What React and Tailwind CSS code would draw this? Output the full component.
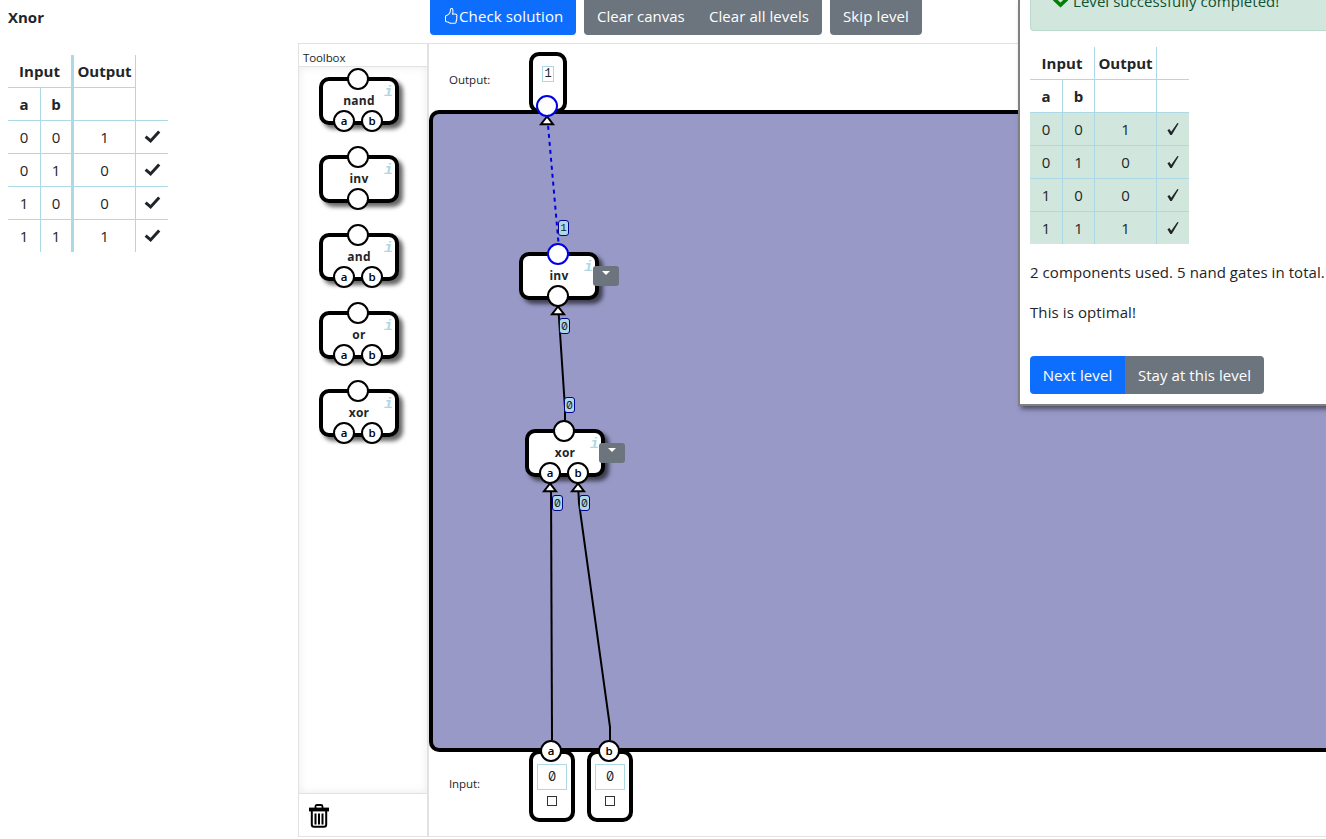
import React from 'react';
import { BsHandThumbsUp } from 'react-icons/bs';

const ROWS = [
  ['0', '0', '1'],
  ['0', '1', '0'],
  ['1', '0', '0'],
  ['1', '1', '1'],
];

function Port({ className, children, active }) {
  return (
    <span
      className={`absolute z-10 flex size-[22px] items-center justify-center rounded-full border-2 bg-white text-[11.5px] font-semibold leading-none text-black ${active ? 'border-[#0000e6]' : 'border-black'} ${className}`}
    >
      {children && <span className="-mt-px">{children}</span>}
    </span>
  );
}

function Gate({ name, className, active, menu }) {
  return (
    <div
      className={`h-12 w-20 rounded-[10px] border-4 border-black bg-white shadow-[4px_4px_4px_rgba(0,0,0,0.6)] ${className}`}
    >
      <Port className="-top-[13px] left-6" active={active} />
      <div className="mt-[11px] text-center text-[12px] font-bold leading-[18px] tracking-[0.25px]">{name}</div>
      <span className="absolute right-[2px] top-[3px] font-['Liberation_Mono',monospace] text-[15px] font-bold italic leading-[18px] text-[#add8e6]">
        i
      </span>
      {name === 'inv' ? (
        <Port className="left-6 top-[29px]" />
      ) : (
        <>
          <Port className="left-[10px] top-[29px]">a</Port>
          <Port className="left-[38px] top-[29px]">b</Port>
        </>
      )}
      {menu && (
        <button className="absolute left-[70px] top-[10px] flex h-5 w-[26px] justify-center rounded-[3px] bg-[#6c757d] pt-[5px]">
          <svg width="8" height="4" viewBox="0 0 8 4"><path d="M0 0h8L4 4z" fill="#fff" /></svg>
        </button>
      )}
    </div>
  );
}

function Value({ className, children }) {
  return (
    <span
      className={`absolute z-20 flex h-4 w-[11px] items-center justify-center rounded-[3px] border border-[#00008b] bg-[#add8e6] font-[Inter,sans-serif] text-[11px] leading-none slashed-zero text-[#222] ${className}`}
    >
      {children}
    </span>
  );
}

function InputBox({ name, className }) {
  return (
    <div className={`absolute top-[706px] flex h-[72px] w-[46px] flex-col items-center rounded-[10px] border-4 border-black bg-white ${className}`}>
      <Port className="-top-[14px] left-[7px]">{name}</Port>
      <div className="mt-[10px] flex h-[26px] w-[30px] items-center justify-center border border-[#add8e6] font-[Inter,sans-serif] text-[13px] slashed-zero text-[#212529]">
        0
      </div>
      <div className="mt-[6px] mr-px size-[10px] border-[1.5px] border-[#333]" />
    </div>
  );
}

function Tick() {
  return (
    <svg className="mx-auto -mt-px block" width="18" height="14" viewBox="0 0 18 14">
      <path d="M2.600 6.600 7.600 11 16.200 1.500" fill="none" stroke="#212529" strokeWidth="3" />
    </svg>
  );
}

function SmallTick() {
  return (
    <svg className="mx-auto block" width="12" height="14" viewBox="0 0 12 14">
      <path d="M.4 8.300 2.400 7l1.800 2.800L10.400 1l1.200.6L4.800 13H3.300z" fill="#212529" />
    </svg>
  );
}

function LevelTable() {
  return (
    <table className="table-fixed border-separate border-spacing-0 text-center text-[15px] leading-6">
      <colgroup>
        <col className="w-[33px]" />
        <col className="w-[33px]" />
        <col className="w-[62px]" />
        <col className="w-8" />
      </colgroup>
      <thead>
        <tr className="h-[33px]">
          <th colSpan={2} className="border-b border-r-[3px] border-[#add8e6] p-0 tracking-[0.1px]">Input</th>
          <th className="border-b border-r border-[#add8e6] p-0">Output</th>
          <th className="p-0" />
        </tr>
        <tr className="h-[33px]">
          <th className="border-b border-r border-[#add8e6] p-0">a</th>
          <th className="border-b border-r-[3px] border-[#add8e6] p-0">b</th>
          <th className="border-b border-r border-[#add8e6] p-0" />
          <th className="border-b border-[#add8e6] p-0" />
        </tr>
      </thead>
      <tbody>
        {ROWS.map(([a, b, out], i) => {
          const line = i < 3 ? 'h-[33px] border-b' : 'h-8';
          return (
            <tr key={i}>
              <td className={`border-r border-[#add8e6] p-0 ${line}`}>{a}</td>
              <td className={`border-r-[3px] border-[#add8e6] p-0 ${line}`}>{b}</td>
              <td className={`border-r border-[#add8e6] p-0 ${line}`}>{out}</td>
              <td className={`border-[#add8e6] p-0 ${line}`}><Tick /></td>
            </tr>
          );
        })}
      </tbody>
    </table>
  );
}

function ResultTable() {
  return (
    <table className="table-fixed border-separate border-spacing-0 text-center text-[15px] leading-6">
      <colgroup>
        <col className="w-[33px]" />
        <col className="w-8" />
        <col className="w-[62px]" />
        <col className="w-8" />
      </colgroup>
      <thead>
        <tr className="h-[33px]">
          <th colSpan={2} className="border-b border-r border-[#add8e6] p-0 tracking-[0.1px]">Input</th>
          <th className="border-b border-r border-[#add8e6] p-0">Output</th>
          <th className="border-b border-[#add8e6] p-0" />
        </tr>
        <tr className="h-[33px]">
          <th className="border-b border-r border-[#add8e6] p-0">a</th>
          <th className="border-b border-r border-[#add8e6] p-0">b</th>
          <th className="border-b border-r border-[#add8e6] p-0" />
          <th className="border-b border-[#add8e6] p-0" />
        </tr>
      </thead>
      <tbody className="bg-[#d1e7dd]">
        {ROWS.map(([a, b, out], i) => {
          const line = i < 3 ? 'h-[33px] border-b' : 'h-8';
          return (
            <tr key={i}>
              <td className={`border-r border-[#add8e6] p-0 ${line}`}>{a}</td>
              <td className={`border-r border-[#add8e6] p-0 ${line}`}>{b}</td>
              <td className={`border-r border-[#add8e6] p-0 ${line}`}>{out}</td>
              <td className={`border-[#add8e6] p-0 ${line}`}><SmallTick /></td>
            </tr>
          );
        })}
      </tbody>
    </table>
  );
}

function Toolbar() {
  return (
    <div className="flex h-[35px] items-end gap-2 pl-[2px] text-[15px] text-white">
      <button className="flex h-[38px] w-[146px] shrink-0 items-center rounded bg-[#0d6efd] pl-[13px]">
        <BsHandThumbsUp size={16} />
        <span className="tracking-[0.13px]">Check solution</span>
      </button>
      <div className="flex h-[38px] w-[238px] shrink-0 items-center justify-between rounded bg-[#6c757d] px-[13px]">
        <button>Clear canvas</button>
        <button className="tracking-[0.07px]">Clear all levels</button>
      </div>
      <button className="h-[38px] w-[92px] shrink-0 rounded bg-[#6c757d] tracking-[0.1px]">Skip level</button>
    </div>
  );
}

function Toolbox() {
  return (
    <aside className="mt-[43px] flex h-[794px] w-[130px] shrink-0 flex-col border border-[#e2e2e2]">
      <div className="h-[23px] border-b border-[#e2e2e2] pl-1 text-[11.5px] leading-[27px] tracking-[-0.1px]">Toolbox</div>
      <div className="flex grow flex-col gap-[30px] pl-5 pt-[10px] shadow-[inset_0_0_10px_rgba(0,0,0,0.08)]">
        {['nand', 'inv', 'and', 'or', 'xor'].map((name) => (
          <Gate key={name} name={name} className="relative" />
        ))}
      </div>
      <div className="h-[43px] border-t border-[#e2e2e2] pl-[10px] pt-[10px]">
        <svg width="20" height="24" viewBox="0 0 20 24" fill="none" stroke="#000">
          <path d="M6.500 4V2.500Q6.500 1 8 1h4q1.500 0 1.500 1.500V4" strokeWidth="1.800" />
          <path d="M0 5.500h20" strokeWidth="3.800" />
          <path d="M2.800 6v14.500q0 2.300 2.200 2.300h10q2.200 0 2.200-2.300V6" strokeWidth="2" />
          <path d="M6.500 9.500v11M10 9.500v11M13.500 9.500v11" strokeWidth="2" />
        </svg>
      </div>
    </aside>
  );
}

function Canvas() {
  return (
    <div className="relative mt-2 flex h-[794px] flex-col overflow-hidden border-y border-l border-[#e2e2e2] text-[11.5px]">
      <div className="flex h-[66px] items-center pl-5 pt-[6px]">Output:</div>
      <div className="h-[642px] shrink-0 rounded-l-[10px] border-4 border-r-0 border-black bg-[#9999c8]" />
      <div className="pl-5 leading-[63px] tracking-[-0.1px]">Input:</div>

      <div className="absolute left-[100px] top-2 flex h-[61px] w-[38px] justify-center rounded-[10px] border-4 border-black bg-white pt-[10px]">
        <span className="flex h-4 w-3 items-center justify-center border border-[#add8e6] font-['Liberation_Mono',monospace] text-[12px]">1</span>
        <Port className="left-[3px] top-[39px]" active />
      </div>
      <InputBox name="a" className="left-[100px]" />
      <InputBox name="b" className="left-[158px]" />

      <svg className="absolute left-0 top-0" width="300" height="792" viewBox="429 44 300 792" fill="none" stroke="#000" strokeWidth="2">
        <path d="M547 118 548 125 558.500 243" stroke="#0000e6" strokeDasharray="4 4" />
        <path d="M558 306 559 318 565 408V421" />
        <path d="M551 484 552 740" />
        <path d="M578 484 579 503 610 727V740" />
        <g fill="#fff">
          <path d="M547 116.500 541 124.200H553z" />
          <path d="M558 306.500 552 314.200H564z" />
          <path d="M550 483.500 544 491.200H556z" />
          <path d="M578 483.500 572 491.200H584z" />
        </g>
      </svg>

      <Gate name="inv" className="absolute left-[90px] top-[208px]" active menu />
      <Gate name="xor" className="absolute left-[96px] top-[385px]" menu />
      <Value className="left-[129px] top-[176px]"><span className="font-['Liberation_Mono',monospace]">1</span></Value>
      <Value className="left-[130px] top-[274px]">0</Value>
      <Value className="left-[135px] top-[353px]">0</Value>
      <Value className="left-[123px] top-[451px]">0</Value>
      <Value className="left-[150px] top-[451px]">0</Value>
    </div>
  );
}

function ResultDialog() {
  return (
    <div className="absolute left-[1018px] top-0 z-30 h-[406px] w-[330px] border-b-2 border-l-2 border-[#808080] bg-white pl-[10px] text-[15px] shadow-[3px_3px_5px_rgba(0,0,0,0.5)]">
      <div className="flex h-[31px] items-start overflow-hidden rounded-b border-b border-l border-[#badbcc] bg-[#d1e7dd] pl-[22px] text-[#0f5132]">
        <svg className="mr-[5px] shrink-0" width="15" height="8" viewBox="0 0 15 8">
          <path d="M1-1 7.500 5 14-1" fill="none" stroke="#008000" strokeWidth="3.600" />
        </svg>
        <span className="-mt-[11px] leading-6 tracking-[0.05px]">Level successfully completed!</span>
      </div>
      <div className="mt-4"><ResultTable /></div>
      <p className="mt-4 whitespace-nowrap leading-6 tracking-[0.07px]">2 components used. 5 nand gates in total.</p>
      <p className="mt-4 leading-6 tracking-[0.1px]">This is optimal!</p>
      <div className="mt-8 flex h-[38px] text-white">
        <button className="w-[95px] rounded-l bg-[#0d6efd] tracking-[0.1px]">Next level</button>
        <button className="w-[139px] rounded-r bg-[#6c757d] tracking-[0.05px]">Stay at this level</button>
      </div>
    </div>
  );
}

export default function App() {
  return (
    <div className="relative flex h-[839px] w-full overflow-hidden bg-white font-['Open_Sans',sans-serif] text-[#212529]">
      <section className="w-[298px] shrink-0 pl-2 pt-[5px]">
        <h1 className="mb-[26px] text-[15px] font-bold leading-6">Xnor</h1>
        <LevelTable />
      </section>
      <Toolbox />
      <main className="min-w-0 grow">
        <Toolbar />
        <Canvas />
      </main>
      <ResultDialog />
    </div>
  );
}
